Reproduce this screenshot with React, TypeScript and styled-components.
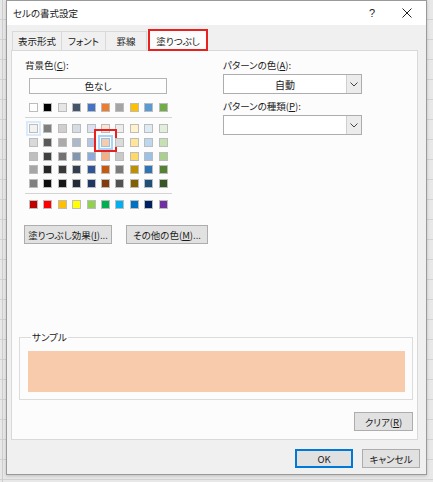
import styled, { createGlobalStyle } from 'styled-components';

const GlobalStyle = createGlobalStyle`
  html, body {
    margin: 0;
    padding: 0;
  }
  body {
    width: 433px;
    height: 482px;
    overflow: hidden;
    font-family: "Noto Sans CJK JP", "Noto Sans", sans-serif;
    font-feature-settings: "palt";
    font-size: 9.5px;
    color: #1a1a1a;
    background-color: #e8e8e8;
    background-image:
      linear-gradient(90deg, transparent 2px, #cdcdcd 2px, #cdcdcd 3px, transparent 3px),
      repeating-linear-gradient(180deg, transparent 0 19px, #d2d2d2 19px 20px);
  }
`;

// Office テーマの色
const themeRow = [
  '#ffffff', '#000000', '#e7e6e6', '#44546a', '#4472c4',
  '#ed7d31', '#a5a5a5', '#ffc000', '#5b9bd5', '#70ad47',
];

const themeShades = [
  ['#f2f2f2', '#7f7f7f', '#d0cece', '#d6dce4', '#d9e1f2', '#fce4d6', '#ededed', '#fff2cc', '#ddebf7', '#e2efda'],
  ['#d9d9d9', '#595959', '#aeaaaa', '#acb9ca', '#b4c6e7', '#f8cbad', '#dbdbdb', '#ffe699', '#bdd7ee', '#c6e0b4'],
  ['#bfbfbf', '#404040', '#757171', '#8497b0', '#8ea9db', '#f4b084', '#c9c9c9', '#ffd966', '#9bc2e6', '#a9d08e'],
  ['#a6a6a6', '#262626', '#3a3838', '#333f4f', '#305496', '#c65911', '#7b7b7b', '#bf8f00', '#2f75b5', '#548235'],
  ['#808080', '#0d0d0d', '#161616', '#222b35', '#203764', '#833c0c', '#525252', '#806000', '#1f4e78', '#375623'],
];

const standardRow = [
  '#c00000', '#ff0000', '#ffc000', '#ffff00', '#92d050',
  '#00b050', '#00b0f0', '#0070c0', '#002060', '#7030a0',
];

const tabs = ['表示形式', 'フォント', '罫線', '塗りつぶし'];
const tabWidths = [50, 44, 41, 60];

const Chevron = () => (
  <svg width="8" height="5" viewBox="0 0 8 5">
    <polyline points="0.5,0.5 4,4 7.5,0.5" fill="none" stroke="#444" strokeWidth="1" />
  </svg>
);

const CloseIcon = () => (
  <svg width="10" height="10" viewBox="0 0 10 10">
    <line x1="0.5" y1="0.5" x2="9.5" y2="9.5" stroke="#222" strokeWidth="1" />
    <line x1="9.5" y1="0.5" x2="0.5" y2="9.5" stroke="#222" strokeWidth="1" />
  </svg>
);

export default function App() {
  const selectedRow = 1;
  const selectedCol = 5;

  return (
    <>
      <GlobalStyle />
      <Dialog>
        <TitleBar>
          <Title>セルの書式設定</Title>
          <TitleButtons>
            <Help>?</Help>
            <CloseIcon />
          </TitleButtons>
        </TitleBar>
        <Body>
          <TabRow>
            {tabs.map((t, i) => (
              <Tab key={t} $active={i === 3} $w={tabWidths[i]}>
                {t}
              </Tab>
            ))}
          </TabRow>
          <Panel>
            <Columns>
              <LeftCol>
                <Label>
                  背景色(<u>C</u>):
                </Label>
                <NoColorButton>色なし</NoColorButton>
                <SwatchRow>
                  {themeRow.map((c, i) => (
                    <Swatch key={c + i} $color={c} />
                  ))}
                </SwatchRow>
                <Separator />
                <SwatchGrid>
                  {themeShades.map((row, r) =>
                    row.map((c, i) => (
                      <Swatch
                        key={`${r}-${i}`}
                        $color={c}
                        $hover={r === 0 && i === 0}
                        $selected={r === selectedRow && i === selectedCol}
                      />
                    ))
                  )}
                </SwatchGrid>
                <Separator />
                <SwatchRow>
                  {standardRow.map((c, i) => (
                    <Swatch key={c + i} $color={c} />
                  ))}
                </SwatchRow>
                <ButtonRow>
                  <PushButton $w={88}>
                    塗りつぶし効果(<u>I</u>)...
                  </PushButton>
                  <PushButton $w={82}>
                    その他の色(<u>M</u>)...
                  </PushButton>
                </ButtonRow>
              </LeftCol>
              <RightCol>
                <Label>
                  パターンの色(<u>A</u>):
                </Label>
                <Combo>
                  <ComboValue>自動</ComboValue>
                  <ComboArrow>
                    <Chevron />
                  </ComboArrow>
                </Combo>
                <Label $gap={5}>
                  パターンの種類(<u>P</u>):
                </Label>
                <Combo>
                  <ComboValue />
                  <ComboArrow>
                    <Chevron />
                  </ComboArrow>
                </Combo>
              </RightCol>
            </Columns>
            <SampleGroup>
              <legend>サンプル</legend>
              <SampleFill />
            </SampleGroup>
            <ClearRow>
              <PushButton $w={59}>
                クリア(<u>R</u>)
              </PushButton>
            </ClearRow>
          </Panel>
          <Footer>
            <PushButton $w={58} $default>
              OK
            </PushButton>
            <PushButton $w={58}>キャンセル</PushButton>
          </Footer>
        </Body>
      </Dialog>
    </>
  );
}

const Dialog = styled.div`
  box-sizing: border-box;
  margin-left: 6px;
  width: 421px;
  height: 475px;
  border: 1px solid #9a9a9a;
  background: #f0f0f0;
  box-shadow: 0 1px 3px rgba(0, 0, 0, 0.18);
  display: flex;
  flex-direction: column;
`;

const TitleBar = styled.div`
  height: 24px;
  background: #ffffff;
  display: flex;
  align-items: center;
  justify-content: space-between;
  padding: 0 14px 0 6px;
`;

const Title = styled.div`
  font-size: 9.5px;
  color: #222;
`;

const TitleButtons = styled.div`
  display: flex;
  align-items: center;
  gap: 27px;
`;

const Help = styled.span`
  font-family: "Liberation Sans", sans-serif;
  font-size: 11px;
  color: #222;
`;

const Body = styled.div`
  flex: 1;
  display: flex;
  flex-direction: column;
  padding: 0 6px 6px 4px;
`;

const TabRow = styled.div`
  height: 25px;
  display: flex;
  align-items: flex-end;
  padding-left: 1px;
`;

const Tab = styled.div<{ $active?: boolean; $w: number }>`
  box-sizing: border-box;
  width: ${(p) => p.$w}px;
  height: ${(p) => (p.$active ? 22 : 19)}px;
  margin-bottom: ${(p) => (p.$active ? -1 : 0)}px;
  margin-left: ${(p) => (p.$active ? 1 : 0)}px;
  display: flex;
  align-items: center;
  justify-content: center;
  background: ${(p) => (p.$active ? '#fcfcfc' : '#f0f0f0')};
  border: 1px solid #d9d9d9;
  border-bottom: none;
  border-left: ${(p) => (p.$active ? '1px solid #d9d9d9' : 'none')};
  padding-top: ${(p) => (p.$active ? 1 : 0)}px;
  position: relative;
  z-index: ${(p) => (p.$active ? 1 : 0)};

  &:first-child {
    border-left: 1px solid #d9d9d9;
  }

  ${(p) =>
    p.$active &&
    `
    &::after {
      content: '';
      position: absolute;
      left: -1px;
      right: -1px;
      top: -1px;
      bottom: 0px;
      border: 2px solid #e8201f;
    }
  `}
`;

const Panel = styled.div`
  box-sizing: border-box;
  height: 390px;
  margin-right: 2px;
  background: #fcfcfc;
  border: 1px solid #d9d9d9;
  display: flex;
  flex-direction: column;
  padding: 7px 4px 8px 13px;
`;

const Columns = styled.div`
  display: flex;
  gap: 14px;
`;

const LeftCol = styled.div`
  width: 184px;
  display: flex;
  flex-direction: column;
`;

const RightCol = styled.div`
  width: 139px;
  display: flex;
  flex-direction: column;
`;

const Label = styled.div<{ $gap?: number }>`
  line-height: 14px;
  margin-top: ${(p) => p.$gap ?? 0}px;
  margin-bottom: 2px;
  white-space: nowrap;

  u {
    text-underline-offset: 1px;
  }
`;

const NoColorButton = styled.div`
  box-sizing: border-box;
  margin: 4px 0 0 4px;
  width: 138px;
  height: 16px;
  border: 1px solid #b4b4b4;
  background: #fdfdfd;
  display: flex;
  align-items: center;
  justify-content: center;
`;

const SwatchRow = styled.div`
  display: grid;
  grid-template-columns: repeat(10, 9px);
  column-gap: 5.4px;
  margin: 9px 0 0 4px;
`;

const SwatchGrid = styled.div`
  display: grid;
  grid-template-columns: repeat(10, 9px);
  grid-auto-rows: 9px;
  column-gap: 5.4px;
  row-gap: 4.75px;
  margin: 6px 0 0 4px;
`;

const Separator = styled.div`
  width: 147px;
  height: 1px;
  background: #d4d4d4;
  margin-top: 5px;

  & + ${SwatchRow} {
    margin-top: 6px;
  }
`;

const Swatch = styled.span<{ $color: string; $selected?: boolean; $hover?: boolean }>`
  box-sizing: border-box;
  width: 9px;
  height: 9px;
  background: ${(p) => p.$color};
  border: 1px solid ${(p) => (p.$selected ? '#8ec5ef' : '#bcbcbc')};
  position: relative;
  outline: ${(p) =>
    p.$selected ? '2px solid #a9d4f5' : p.$hover ? '2px solid #d9ebfa' : 'none'};
  outline-offset: 1px;

  ${(p) =>
    p.$selected &&
    `
    &::after {
      content: '';
      position: absolute;
      left: -8px;
      right: -8px;
      top: -10px;
      bottom: -6px;
      border: 2px solid #e8201f;
    }
  `}
`;

const ButtonRow = styled.div`
  display: flex;
  gap: 14px;
  margin: 16px 0 0 -1px;
  white-space: nowrap;
`;

const PushButton = styled.button<{ $w: number; $default?: boolean }>`
  box-sizing: border-box;
  width: ${(p) => p.$w}px;
  height: 19px;
  padding: 0;
  font: inherit;
  font-feature-settings: "palt";
  color: #1a1a1a;
  white-space: nowrap;
  background: #e1e1e1;
  border: 1px solid ${(p) => (p.$default ? '#0078d7' : '#adadad')};
  box-shadow: ${(p) => (p.$default ? 'inset 0 0 0 1px #0078d7' : 'none')};

  u {
    text-underline-offset: 1px;
  }
`;

const Combo = styled.div`
  box-sizing: border-box;
  display: flex;
  height: 20px;
  border: 1px solid #adadad;
  background: #ffffff;
`;

const ComboValue = styled.div`
  flex: 1;
  display: flex;
  align-items: center;
  justify-content: center;
  font-size: 10px;
`;

const ComboArrow = styled.div`
  width: 14px;
  display: flex;
  align-items: center;
  justify-content: center;
  background: #ececec;
  border-left: 1px solid #cfcfcf;
`;

const SampleGroup = styled.fieldset`
  margin: auto 0 0 -6px;
  padding: 0 7px 7px 8px;
  border: 1px solid #dcdcdc;
  min-width: 0;

  legend {
    padding: 0 1px;
    margin-left: 3px;
    line-height: 14px;
  }
`;

const SampleFill = styled.div`
  height: 41px;
  margin-top: 7px;
  background: #f8cbad;
`;

const ClearRow = styled.div`
  display: flex;
  justify-content: flex-end;
  margin-top: 12px;
`;

const Footer = styled.div`
  display: flex;
  justify-content: flex-end;
  gap: 9px;
  margin-top: 9px;
`;
